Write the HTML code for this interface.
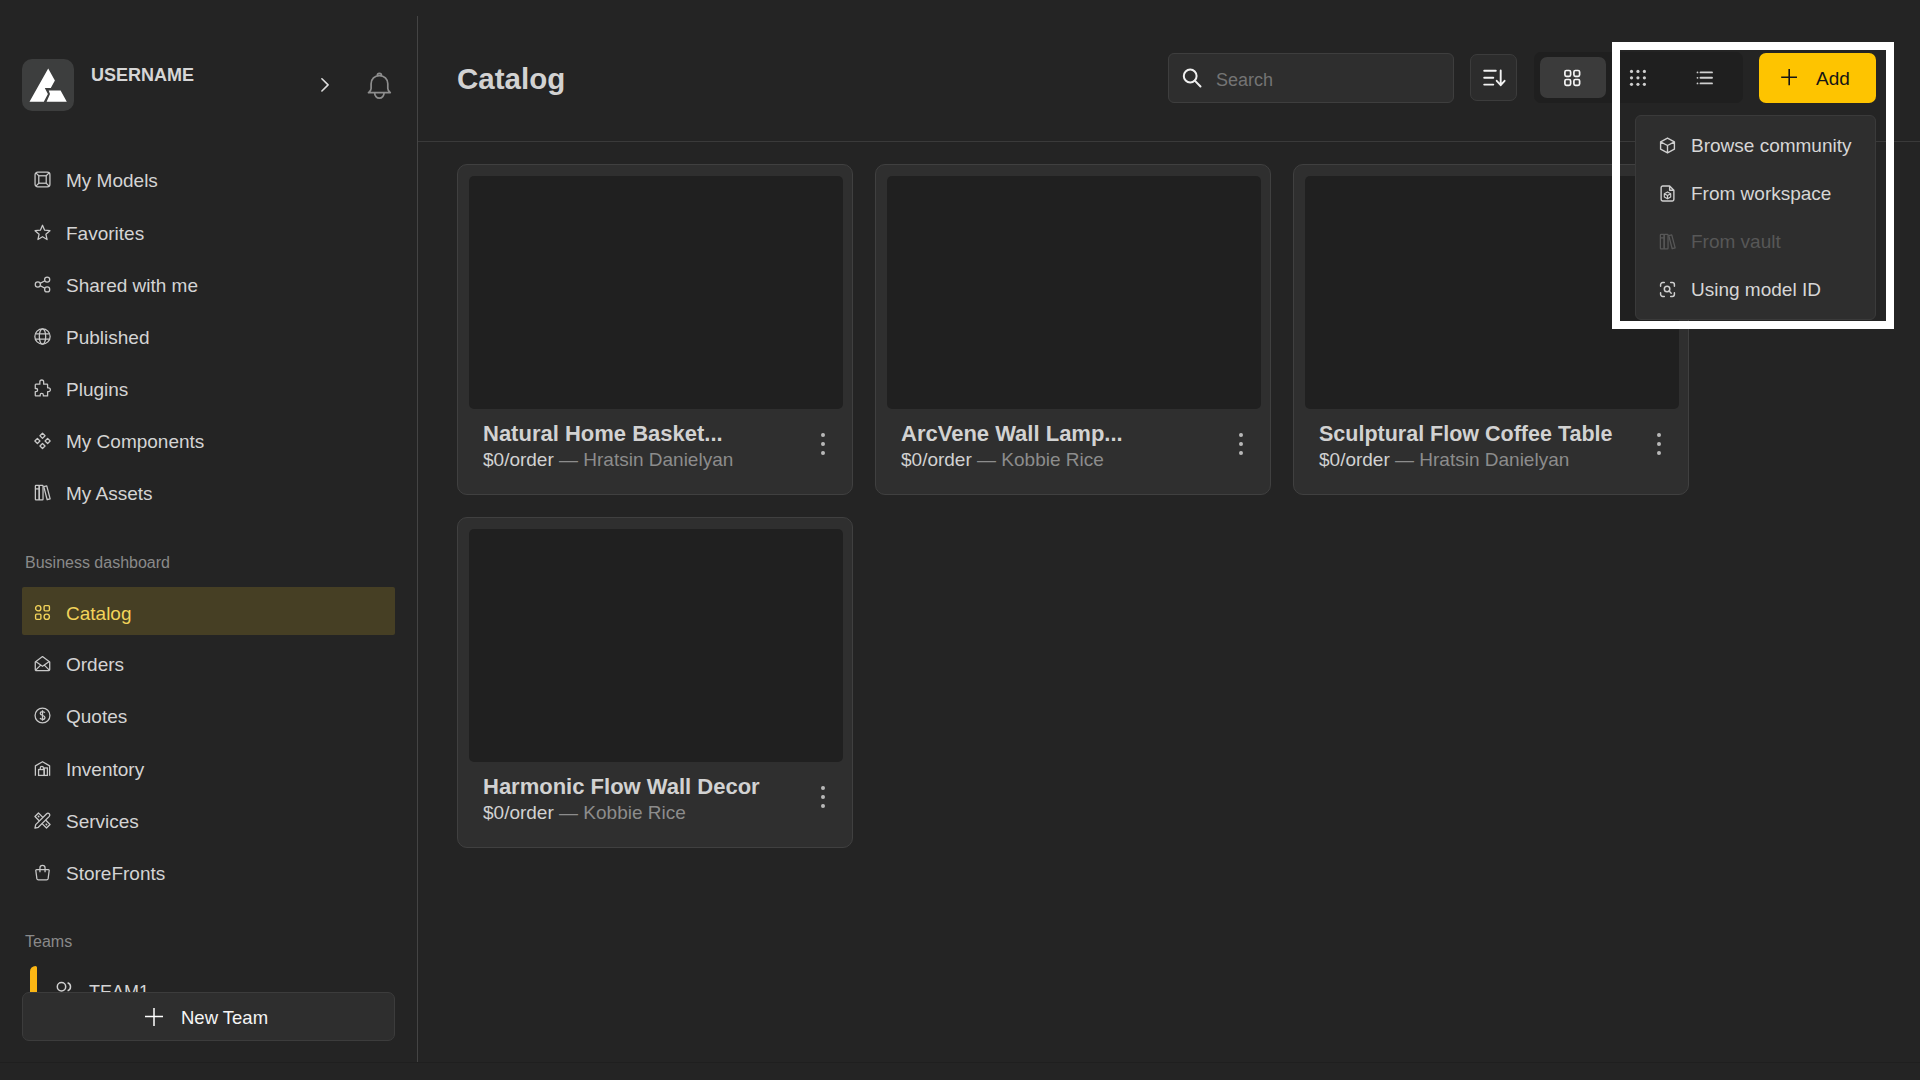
<!DOCTYPE html>
<html><head><meta charset="utf-8"><title>Catalog</title>
<style>
html,body{margin:0;padding:0;width:1920px;height:1080px;overflow:hidden;background:#242424;}
body{position:relative;font-family:"Liberation Sans", sans-serif;}
.t{position:absolute;white-space:nowrap;line-height:1;font-family:"Liberation Sans", sans-serif;}
svg{overflow:visible}
</style></head><body>
<div style="position:absolute;left:417px;top:16px;width:1px;height:1046px;background:#444444"></div><div style="position:absolute;left:0px;top:1062px;width:1920px;height:1px;background:#1f1f1f"></div><div style="position:absolute;left:22px;top:59px;width:52px;height:52px;background:#3d3e3e;border-radius:10px"></div><svg style="position:absolute;left:22px;top:59px;" width="52" height="52" viewBox="0 0 52 52" fill="none"><path d="M26.2 9.6 L32.9 21.5 L28.8 29 L22.8 29 L25.9 35 L21.8 42.8 L7.5 42.8 Z" fill="#fff"/><path d="M26.7 31.6 L38.6 31.6 L44.8 42.8 L24.6 42.8 L28 35 Z" fill="#fff"/></svg><div class="t" style="left:91px;top:66px;font-size:18px;color:#d6d6d6;font-weight:700;">USERNAME</div><svg style="position:absolute;left:318px;top:76px;" width="14" height="18" viewBox="0 0 14 18" fill="none"><path d="M3.9 2.75 L10.1 8.9 L3.9 15" stroke="#dddddd" stroke-width="1.6" stroke-linecap="round" stroke-linejoin="round"/></svg><svg style="position:absolute;left:366px;top:70px;" width="28" height="30" viewBox="0 0 28 30" fill="none"><path d="M13.4 5.6 C8.6 5.6 5.1 9 5.1 13.8 V18.5 C5.1 20.5 3.6 21.6 2.5 22.6 H24.3 C23.2 21.6 21.8 20.5 21.8 18.5 V13.8 C21.8 9 18.2 5.6 13.4 5.6 Z M11.3 5.4 a2.1 2.1 0 0 1 4.2 0 M8.6 22.8 a4.75 5.4 0 0 0 9.5 0" stroke="#8e8e8e" stroke-width="1.7" stroke-linecap="round" stroke-linejoin="round"/></svg><div class="t" style="left:66px;top:171px;font-size:19px;color:#d4d4d4;font-weight:400;">My Models</div><svg style="position:absolute;left:34px;top:171px;" width="17" height="17" viewBox="0 0 16 16" fill="none"><rect x="1" y="1" width="14" height="14" rx="2.5" stroke="#c8c8c8" stroke-width="1.2"/><rect x="4.5" y="4.5" width="7" height="7" stroke="#c8c8c8" stroke-width="1.2"/><path d="M1.8 1.8 L4.5 4.5 M14.2 1.8 L11.5 4.5 M1.8 14.2 L4.5 11.5 M14.2 14.2 L11.5 11.5" stroke="#c8c8c8" stroke-width="1.1"/></svg><div class="t" style="left:66px;top:224px;font-size:19px;color:#d4d4d4;font-weight:400;">Favorites</div><svg style="position:absolute;left:34px;top:224px;" width="17" height="17" viewBox="0 0 16 16" fill="none"><path d="M8 1.2 L10 5.8 L15 6.3 L11.2 9.6 L12.3 14.6 L8 12 L3.7 14.6 L4.8 9.6 L1 6.3 L6 5.8 Z" stroke="#c8c8c8" stroke-width="1.2" stroke-linejoin="round"/></svg><div class="t" style="left:66px;top:276px;font-size:19px;color:#d4d4d4;font-weight:400;">Shared with me</div><svg style="position:absolute;left:34px;top:276px;" width="17" height="17" viewBox="0 0 16 16" fill="none"><circle cx="3.6" cy="8" r="2.4" stroke="#c8c8c8" stroke-width="1.2"/><circle cx="12.4" cy="3.4" r="2.4" stroke="#c8c8c8" stroke-width="1.2"/><circle cx="12.4" cy="12.6" r="2.4" stroke="#c8c8c8" stroke-width="1.2"/><path d="M5.7 6.9 L10.3 4.5 M5.7 9.1 L10.3 11.5" stroke="#c8c8c8" stroke-width="1.2"/></svg><div class="t" style="left:66px;top:328px;font-size:19px;color:#d4d4d4;font-weight:400;">Published</div><svg style="position:absolute;left:34px;top:328px;" width="17" height="17" viewBox="0 0 16 16" fill="none"><circle cx="8" cy="8" r="7.2" stroke="#c8c8c8" stroke-width="1.2"/><ellipse cx="8" cy="8" rx="3" ry="7.2" stroke="#c8c8c8" stroke-width="1.2"/><path d="M1.5 5.5 H14.5 M1.5 10.5 H14.5" stroke="#c8c8c8" stroke-width="1.2"/></svg><div class="t" style="left:66px;top:380px;font-size:19px;color:#d4d4d4;font-weight:400;">Plugins</div><svg style="position:absolute;left:34px;top:380px;" width="17" height="17" viewBox="0 0 16 16" fill="none"><path d="M5.5 1.8 a1.8 1.8 0 0 1 3.6 0 V3.9 H12.2 a0.6 0.6 0 0 1 .6 .6 V7.4 H13.6 a1.8 1.8 0 0 1 0 3.6 H12.8 V15 H8.8 V14 a1.5 1.5 0 0 0 -3 0 V15 H1.8 a0.6 0.6 0 0 1 -.6 -.6 V11 H1.9 a1.5 1.5 0 0 0 0 -3 H1.2 V4.5 a0.6 0.6 0 0 1 .6 -.6 H5.5 Z" stroke="#c8c8c8" stroke-width="1.2" stroke-linejoin="round"/></svg><div class="t" style="left:66px;top:432px;font-size:19px;color:#d4d4d4;font-weight:400;">My Components</div><svg style="position:absolute;left:34px;top:432px;" width="17" height="17" viewBox="0 0 16 16" fill="none"><path d="M8 1.2 L10.4 3.6 L8 6 L5.6 3.6 Z M3.2 6 L5.6 8.4 L3.2 10.8 L0.8 8.4 Z M12.8 6 L15.2 8.4 L12.8 10.8 L10.4 8.4 Z M8 10.8 L10.4 13.2 L8 15.6 L5.6 13.2 Z" stroke="#c8c8c8" stroke-width="1.2" stroke-linejoin="round"/></svg><div class="t" style="left:66px;top:484px;font-size:19px;color:#d4d4d4;font-weight:400;">My Assets</div><svg style="position:absolute;left:34px;top:484px;" width="17" height="17" viewBox="0 0 16 16" fill="none"><rect x="1.3" y="1.3" width="3.6" height="13.6" rx="0.6" stroke="#c8c8c8" stroke-width="1.2"/><rect x="4.9" y="1.3" width="3.6" height="13.6" rx="0.6" stroke="#c8c8c8" stroke-width="1.2"/><path d="M9.2 2.5 L12 1.8 L15.2 14 L12.4 14.8 Z" stroke="#c8c8c8" stroke-width="1.2" stroke-linejoin="round"/><path d="M1.3 4.6 H4.9" stroke="#c8c8c8" stroke-width="1.2"/></svg><div class="t" style="left:25px;top:555px;font-size:16px;color:#8a8a8a;font-weight:400;">Business dashboard</div><div style="position:absolute;left:22px;top:587px;width:373px;height:48px;background:#463f24;border-radius:2px"></div><div class="t" style="left:66px;top:604px;font-size:19px;color:#f2d35a;font-weight:400;">Catalog</div><svg style="position:absolute;left:34px;top:604px;" width="17" height="17" viewBox="0 0 16 16" fill="none"><rect x="1.5" y="1.5" width="5" height="5" rx="2.5" stroke="#f2d35a" stroke-width="1.3"/><rect x="9.5" y="1.5" width="5" height="5" rx="1" stroke="#f2d35a" stroke-width="1.3"/><rect x="1.5" y="9.5" width="5" height="5" rx="1" stroke="#f2d35a" stroke-width="1.3"/><rect x="9.5" y="9.5" width="5" height="5" rx="2.5" stroke="#f2d35a" stroke-width="1.3"/></svg><div class="t" style="left:66px;top:655px;font-size:19px;color:#d4d4d4;font-weight:400;">Orders</div><svg style="position:absolute;left:34px;top:655px;" width="17" height="17" viewBox="0 0 16 16" fill="none"><path d="M1.2 6.5 L8 1.5 L14.8 6.5 V13.6 a1 1 0 0 1 -1 1 H2.2 a1 1 0 0 1 -1 -1 Z" stroke="#c8c8c8" stroke-width="1.2" stroke-linejoin="round"/><path d="M1.6 6.2 L8 10.6 L14.4 6.2 M1.6 14.2 L6.3 9.5 M14.4 14.2 L9.7 9.5" stroke="#c8c8c8" stroke-width="1.2"/></svg><div class="t" style="left:66px;top:707px;font-size:19px;color:#d4d4d4;font-weight:400;">Quotes</div><svg style="position:absolute;left:34px;top:707px;" width="17" height="17" viewBox="0 0 16 16" fill="none"><circle cx="8" cy="8" r="7" stroke="#c8c8c8" stroke-width="1.2"/><path d="M10.2 5.4 C9.8 4.6 9 4.3 8 4.3 C6.8 4.3 5.9 5 5.9 6 C5.9 8.2 10.3 7.3 10.3 9.9 C10.3 11 9.3 11.7 8 11.7 C6.9 11.7 6 11.3 5.7 10.4 M8 3 V13" stroke="#c8c8c8" stroke-width="1.2"/></svg><div class="t" style="left:66px;top:760px;font-size:19px;color:#d4d4d4;font-weight:400;">Inventory</div><svg style="position:absolute;left:34px;top:760px;" width="17" height="17" viewBox="0 0 16 16" fill="none"><path d="M1.3 14.8 V5.5 L8 1.6 L14.7 5.5 V14.8" stroke="#c8c8c8" stroke-width="1.2" stroke-linejoin="round"/><rect x="4.3" y="9" width="5.3" height="5.5" stroke="#c8c8c8" stroke-width="1.2"/><rect x="9.6" y="7.5" width="3" height="7" stroke="#c8c8c8" stroke-width="1.2"/><path d="M5.9 9 V7.6 a1.5 1.5 0 0 1 3 0 V9" stroke="#c8c8c8" stroke-width="1.2"/></svg><div class="t" style="left:66px;top:812px;font-size:19px;color:#d4d4d4;font-weight:400;">Services</div><svg style="position:absolute;left:34px;top:812px;" width="17" height="17" viewBox="0 0 16 16" fill="none"><path d="M0.9 15.1 L1.6 11.9 L11.9 1.6 A1.77 1.77 0 0 1 14.4 4.1 L4.1 14.4 Z" stroke="#c8c8c8" stroke-width="1.2" stroke-linejoin="round"/><path d="M8.4 5.1 L4.2 0.9 L0.9 4.2 L5.1 8.4 M10.9 7.6 L15.1 11.8 L11.8 15.1 L7.6 10.9 M3.6 3.6 L5 5 M11 11 L12.4 12.4" stroke="#c8c8c8" stroke-width="1.2" stroke-linejoin="round"/></svg><div class="t" style="left:66px;top:864px;font-size:19px;color:#d4d4d4;font-weight:400;">StoreFronts</div><svg style="position:absolute;left:34px;top:864px;" width="17" height="17" viewBox="0 0 16 16" fill="none"><path d="M2.5 5.2 H13.5 a.8 .8 0 0 1 .8 .9 L13.3 13.8 a1.5 1.5 0 0 1 -1.5 1.2 H4.2 a1.5 1.5 0 0 1 -1.5 -1.2 L1.7 6.1 a.8 .8 0 0 1 .8 -.9 Z" stroke="#c8c8c8" stroke-width="1.2"/><path d="M5.6 7.8 V3.6 a2.4 2.4 0 0 1 4.8 0 V7.8" stroke="#c8c8c8" stroke-width="1.2"/></svg><div class="t" style="left:25px;top:934px;font-size:16px;color:#8a8a8a;font-weight:400;">Teams</div><div style="position:absolute;left:0;top:950px;width:417px;height:42px;overflow:hidden"><div style="position:absolute;left:30px;top:16px;width:7px;height:60px;background:#fbb614;border-top-left-radius:7px;border-top-right-radius:2px"></div><svg style="position:absolute;left:56px;top:31px;" width="18" height="14" viewBox="0 0 18 14" fill="none"><circle cx="5.5" cy="5.8" r="4.2" stroke="#d0d0d0" stroke-width="1.5"/><path d="M11.6 1.8 a4.2 4.2 0 0 1 0 8" stroke="#d0d0d0" stroke-width="1.5"/></svg><div class="t" style="left:89px;top:33px;font-size:18px;color:#d4d4d4">TEAM1</div></div><div style="position:absolute;left:22px;top:992px;width:373px;height:49px;box-sizing:border-box;background:#2e2e2e;border:1px solid #3c3c3c;border-radius:7px"></div><svg style="position:absolute;left:144px;top:1007px;" width="20" height="20" viewBox="0 0 20 20" fill="none"><path d="M10 1 V19 M1 9.5 H19" stroke="#ffffff" stroke-width="1.5"/></svg><div class="t" style="left:181px;top:1009px;font-size:18.5px;color:#f5f5f5;font-weight:400;">New Team</div><div style="position:absolute;left:418px;top:141px;width:1502px;height:1px;background:#3a3a3a"></div><div class="t" style="left:457px;top:64px;font-size:29.5px;color:#d2d2d2;font-weight:700;">Catalog</div><div style="position:absolute;left:1168px;top:53px;width:286px;height:50px;box-sizing:border-box;background:#2e2e2e;border:1px solid #3e3e3e;border-radius:6px"></div><svg style="position:absolute;left:1180px;top:65px;" width="24" height="24" viewBox="0 0 24 24" fill="none"><circle cx="10.2" cy="11" r="6.4" stroke="#f0f0f0" stroke-width="2"/><path d="M14.8 15.6 L20.5 21.5" stroke="#f0f0f0" stroke-width="2" stroke-linecap="round"/></svg><div class="t" style="left:1216px;top:71px;font-size:18px;color:#747474;font-weight:400;">Search</div><div style="position:absolute;left:1470px;top:54px;width:47px;height:47px;box-sizing:border-box;background:#2c2c2c;border:1px solid #3c3c3c;border-radius:7px"></div><svg style="position:absolute;left:1470px;top:54px;" width="47" height="47" viewBox="0 0 47 47" fill="none"><path d="M14.2 16.8 H25.8 M14.2 23.7 H23.3 M14.2 30.6 H23.3" stroke="#f2f2f2" stroke-width="1.9" stroke-linecap="round"/><path d="M30.7 16.4 V31.2 M26.7 26.8 L30.7 31.2 L34.6 26.8" stroke="#f2f2f2" stroke-width="1.9" stroke-linecap="round" stroke-linejoin="round"/></svg><div style="position:absolute;left:1534px;top:52px;width:209px;height:51px;background:#1f1f1f;border-radius:7px"></div><div style="position:absolute;left:1540px;top:57px;width:66px;height:41px;background:#3b3b3b;border-radius:7px"></div><svg style="position:absolute;left:1563px;top:69px;" width="18" height="18" viewBox="0 0 18 18" fill="none"><rect x="1.9" y="1.5" width="5.7" height="5.8" rx="1.5" stroke="#f5f5f5" stroke-width="1.7"/><rect x="10.9" y="1.5" width="5.7" height="5.8" rx="1.5" stroke="#f5f5f5" stroke-width="1.7"/><rect x="1.9" y="10.5" width="5.7" height="5.8" rx="1.5" stroke="#f5f5f5" stroke-width="1.7"/><rect x="10.9" y="10.5" width="5.7" height="5.8" rx="1.5" stroke="#f5f5f5" stroke-width="1.7"/></svg><svg style="position:absolute;left:1620px;top:60px;" width="40" height="40" viewBox="0 0 40 40" fill="none"><circle cx="11.5" cy="11.400000000000006" r="1.6" fill="#cfcfcf"/><circle cx="11.5" cy="17.85000000000001" r="1.6" fill="#cfcfcf"/><circle cx="11.5" cy="24.30000000000001" r="1.6" fill="#cfcfcf"/><circle cx="17.950000000000045" cy="11.400000000000006" r="1.6" fill="#cfcfcf"/><circle cx="17.950000000000045" cy="17.85000000000001" r="1.6" fill="#cfcfcf"/><circle cx="17.950000000000045" cy="24.30000000000001" r="1.6" fill="#cfcfcf"/><circle cx="24.40000000000009" cy="11.400000000000006" r="1.6" fill="#cfcfcf"/><circle cx="24.40000000000009" cy="17.85000000000001" r="1.6" fill="#cfcfcf"/><circle cx="24.40000000000009" cy="24.30000000000001" r="1.6" fill="#cfcfcf"/></svg><svg style="position:absolute;left:1690px;top:60px;" width="30" height="30" viewBox="0 0 30 30" fill="none"><path d="M10.5 12.4 H22 M10.5 17.8 H22 M10.5 23.4 H22" stroke="#cfcfcf" stroke-width="1.9" stroke-linecap="round"/><circle cx="7.5" cy="12.4" r="0.9" fill="#cfcfcf"/><circle cx="7.5" cy="17.8" r="0.9" fill="#cfcfcf"/><circle cx="7.5" cy="23.4" r="0.9" fill="#cfcfcf"/></svg><div style="position:absolute;left:1759px;top:53px;width:117px;height:50px;background:#fec400;border-radius:7px"></div><svg style="position:absolute;left:1779px;top:67px;" width="20" height="20" viewBox="0 0 20 20" fill="none"><path d="M10.2 1.9 V18.3 M2.2 10.2 H18" stroke="#151515" stroke-width="1.6"/></svg><div class="t" style="left:1816px;top:69px;font-size:19px;color:#151515;font-weight:400;">Add</div><div style="position:absolute;left:457px;top:164px;width:396px;height:331px;box-sizing:border-box;background:#2f2f2f;border:1px solid #404040;border-radius:10px"></div><div style="position:absolute;left:469px;top:176px;width:374px;height:233px;background:#202020;border-radius:5px"></div><div class="t" style="left:483px;top:423px;font-size:22px;color:#d2d2d2;font-weight:700;">Natural Home Basket...</div><div class="t" style="left:483px;top:450px;font-size:19px;color:#d2d2d2;font-weight:400;">$0/order <span style="color:#8c8c8c">— Hratsin Danielyan</span></div><div style="position:absolute;left:821.2px;top:433.3px;width:3.8px;height:3.8px;background:#b8b8b8;border-radius:50%"></div><div style="position:absolute;left:821.2px;top:442.1px;width:3.8px;height:3.8px;background:#b8b8b8;border-radius:50%"></div><div style="position:absolute;left:821.2px;top:450.90000000000003px;width:3.8px;height:3.8px;background:#b8b8b8;border-radius:50%"></div><div style="position:absolute;left:875px;top:164px;width:396px;height:331px;box-sizing:border-box;background:#2f2f2f;border:1px solid #404040;border-radius:10px"></div><div style="position:absolute;left:887px;top:176px;width:374px;height:233px;background:#202020;border-radius:5px"></div><div class="t" style="left:901px;top:423px;font-size:22px;color:#d2d2d2;font-weight:700;">ArcVene Wall Lamp...</div><div class="t" style="left:901px;top:450px;font-size:19px;color:#d2d2d2;font-weight:400;">$0/order <span style="color:#8c8c8c">— Kobbie Rice</span></div><div style="position:absolute;left:1239.2px;top:433.3px;width:3.8px;height:3.8px;background:#b8b8b8;border-radius:50%"></div><div style="position:absolute;left:1239.2px;top:442.1px;width:3.8px;height:3.8px;background:#b8b8b8;border-radius:50%"></div><div style="position:absolute;left:1239.2px;top:450.90000000000003px;width:3.8px;height:3.8px;background:#b8b8b8;border-radius:50%"></div><div style="position:absolute;left:1293px;top:164px;width:396px;height:331px;box-sizing:border-box;background:#2f2f2f;border:1px solid #404040;border-radius:10px"></div><div style="position:absolute;left:1305px;top:176px;width:374px;height:233px;background:#202020;border-radius:5px"></div><div class="t" style="left:1319px;top:424px;font-size:21.5px;color:#d2d2d2;font-weight:700;">Sculptural Flow Coffee Table</div><div class="t" style="left:1319px;top:450px;font-size:19px;color:#d2d2d2;font-weight:400;">$0/order <span style="color:#8c8c8c">— Hratsin Danielyan</span></div><div style="position:absolute;left:1657.2px;top:433.3px;width:3.8px;height:3.8px;background:#b8b8b8;border-radius:50%"></div><div style="position:absolute;left:1657.2px;top:442.1px;width:3.8px;height:3.8px;background:#b8b8b8;border-radius:50%"></div><div style="position:absolute;left:1657.2px;top:450.90000000000003px;width:3.8px;height:3.8px;background:#b8b8b8;border-radius:50%"></div><div style="position:absolute;left:457px;top:517px;width:396px;height:331px;box-sizing:border-box;background:#2f2f2f;border:1px solid #404040;border-radius:10px"></div><div style="position:absolute;left:469px;top:529px;width:374px;height:233px;background:#202020;border-radius:5px"></div><div class="t" style="left:483px;top:776px;font-size:22px;color:#d2d2d2;font-weight:700;">Harmonic Flow Wall Decor</div><div class="t" style="left:483px;top:803px;font-size:19px;color:#d2d2d2;font-weight:400;">$0/order <span style="color:#8c8c8c">— Kobbie Rice</span></div><div style="position:absolute;left:821.2px;top:786.3px;width:3.8px;height:3.8px;background:#b8b8b8;border-radius:50%"></div><div style="position:absolute;left:821.2px;top:795.0999999999999px;width:3.8px;height:3.8px;background:#b8b8b8;border-radius:50%"></div><div style="position:absolute;left:821.2px;top:803.9px;width:3.8px;height:3.8px;background:#b8b8b8;border-radius:50%"></div><div style="position:absolute;left:1635px;top:115px;width:241px;height:205px;box-sizing:border-box;background:#2e2e2e;border:1px solid #3a3a3a;border-radius:6px"></div><div class="t" style="left:1691px;top:136px;font-size:19px;color:#d6d6d6;font-weight:400;">Browse community</div><svg style="position:absolute;left:1659px;top:137px;" width="17" height="17" viewBox="0 0 16 16" fill="none"><path d="M8 1 L14.5 4.5 V11.5 L8 15 L1.5 11.5 V4.5 Z M1.5 4.5 L8 8 L14.5 4.5 M8 8 V15" stroke="#cfcfcf" stroke-width="1.3" stroke-linejoin="round"/></svg><div class="t" style="left:1691px;top:184px;font-size:19px;color:#d6d6d6;font-weight:400;">From workspace</div><svg style="position:absolute;left:1659px;top:185px;" width="17" height="17" viewBox="0 0 16 16" fill="none"><path d="M3.5 1 H10 L14 5 V13.5 a1.5 1.5 0 0 1 -1.5 1.5 H3.5 a1.5 1.5 0 0 1 -1.5 -1.5 V2.5 a1.5 1.5 0 0 1 1.5 -1.5 Z M10 1 V5 H14" stroke="#cfcfcf" stroke-width="1.3" stroke-linejoin="round"/><path d="M8 6.5 L11 8.2 V11.3 L8 13 L5 11.3 V8.2 Z M5 8.2 L8 9.8 L11 8.2 M8 9.8 V13" stroke="#cfcfcf" stroke-width="1.1" stroke-linejoin="round"/></svg><div class="t" style="left:1691px;top:232px;font-size:19px;color:#575757;font-weight:400;">From vault</div><svg style="position:absolute;left:1659px;top:233px;" width="17" height="17" viewBox="0 0 16 16" fill="none"><rect x="1.3" y="1.3" width="3.6" height="13.6" rx="0.6" stroke="#575757" stroke-width="1.2"/><rect x="4.9" y="1.3" width="3.6" height="13.6" rx="0.6" stroke="#575757" stroke-width="1.2"/><path d="M9.2 2.5 L12 1.8 L15.2 14 L12.4 14.8 Z" stroke="#575757" stroke-width="1.2" stroke-linejoin="round"/><path d="M1.3 4.6 H4.9" stroke="#575757" stroke-width="1.2"/></svg><div class="t" style="left:1691px;top:280px;font-size:19px;color:#d6d6d6;font-weight:400;">Using model ID</div><svg style="position:absolute;left:1659px;top:281px;" width="17" height="17" viewBox="0 0 16 16" fill="none"><path d="M1.5 5 V3.5 a2 2 0 0 1 2 -2 H5 M11 1.5 H12.5 a2 2 0 0 1 2 2 V5 M14.5 11 V12.5 a2 2 0 0 1 -2 2 H11 M5 14.5 H3.5 a2 2 0 0 1 -2 -2 V11" stroke="#cfcfcf" stroke-width="1.4" stroke-linecap="round"/><circle cx="7.6" cy="7.6" r="2.6" stroke="#cfcfcf" stroke-width="1.4"/><path d="M9.5 9.5 L11.5 11.5" stroke="#cfcfcf" stroke-width="1.4" stroke-linecap="round"/></svg><div style="position:absolute;left:1612px;top:42px;width:282px;height:287px;box-sizing:border-box;border:8px solid #ffffff"></div>
</body></html>
